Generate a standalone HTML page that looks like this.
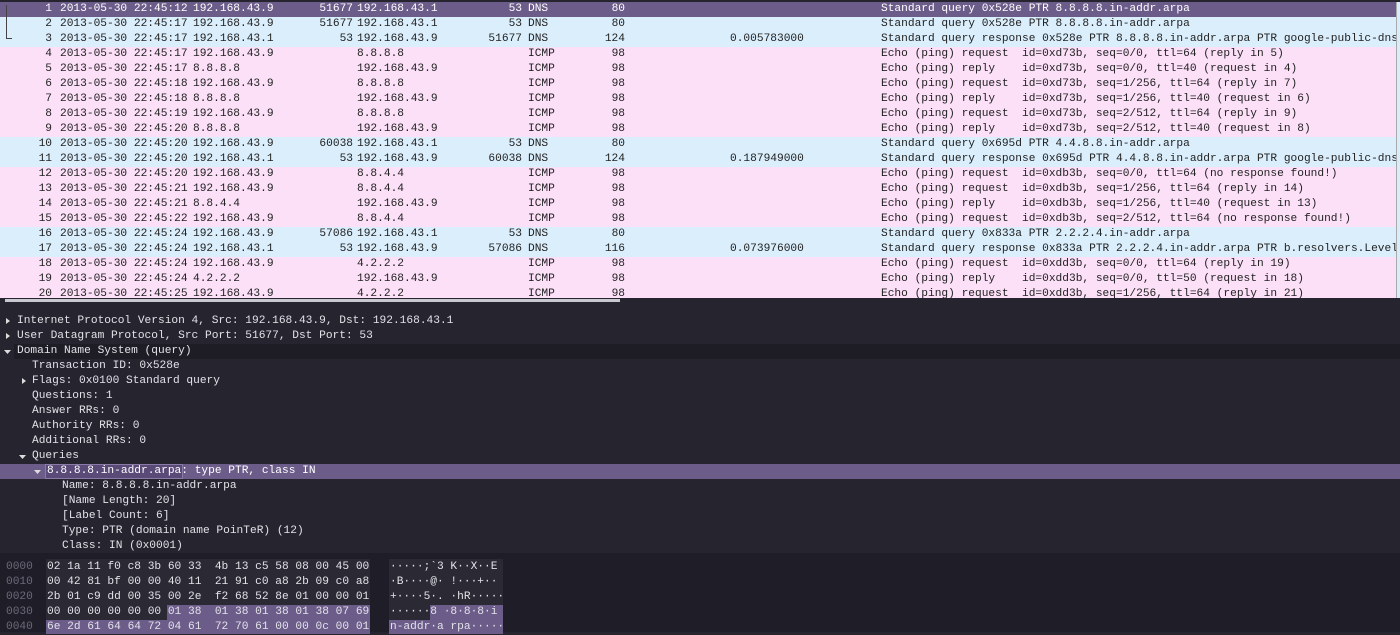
<!DOCTYPE html>
<html><head><meta charset="utf-8"><style>
*{margin:0;padding:0;box-sizing:border-box}
body{width:1400px;height:632px;overflow:hidden;background:#25242f;font-family:"Liberation Mono","DejaVu Sans Mono",monospace;font-size:11.2px;position:relative}
.pl{position:absolute;left:0;top:0;width:1400px;height:298px;background:#25242f;overflow:hidden}
.r{position:absolute;left:0;width:1396px;height:15px;line-height:15px;color:#222;white-space:pre;overflow:hidden}
.r span{position:absolute;top:0}
.d{background:#daeefc}.i{background:#fce0f8}.s{background:#6c5c8a;color:#fff}
.n{right:1344px;text-align:right}
.t{left:60px}.sr{left:193px}.sp{right:1043px}.ds{left:357px}.dp{right:874px}.pr{left:528px}.ln{right:771px}.dt{left:730px}.in{left:881px}
.sb{position:absolute;left:1396px;top:2px;width:1px;height:296px;background:#aaa}
.hs{position:absolute;left:5px;top:299px;width:615px;height:3px;background:#c8c8d0}
.dp2{position:absolute;left:0;top:306px;width:1400px;height:246px;background:#25242f}
.x{position:absolute;height:15px;line-height:15px;color:#e2e2e8;white-space:pre}
.hx{position:absolute;left:0;top:553px;width:1400px;height:79px;background:#1f1e28}
.h{position:absolute;height:15px;line-height:15px;white-space:pre;color:#e2e2e8}
.off{color:#6a6a78}
</style></head><body>
<div class="pl">
<div class="r s" style="top:2px"><span class="n">1</span><span class="t">2013-05-30 22:45:12</span><span class="sr">192.168.43.9</span><span class="sp">51677</span><span class="ds">192.168.43.1</span><span class="dp">53</span><span class="pr">DNS</span><span class="ln">80</span><span class="in">Standard query 0x528e PTR 8.8.8.8.in-addr.arpa</span></div>
<div class="r d" style="top:17px"><span class="n">2</span><span class="t">2013-05-30 22:45:17</span><span class="sr">192.168.43.9</span><span class="sp">51677</span><span class="ds">192.168.43.1</span><span class="dp">53</span><span class="pr">DNS</span><span class="ln">80</span><span class="in">Standard query 0x528e PTR 8.8.8.8.in-addr.arpa</span></div>
<div class="r d" style="top:32px"><span class="n">3</span><span class="t">2013-05-30 22:45:17</span><span class="sr">192.168.43.1</span><span class="sp">53</span><span class="ds">192.168.43.9</span><span class="dp">51677</span><span class="pr">DNS</span><span class="ln">124</span><span class="dt">0.005783000</span><span class="in">Standard query response 0x528e PTR 8.8.8.8.in-addr.arpa PTR google-public-dns-a.google.com</span></div>
<div class="r i" style="top:47px"><span class="n">4</span><span class="t">2013-05-30 22:45:17</span><span class="sr">192.168.43.9</span><span class="ds">8.8.8.8</span><span class="pr">ICMP</span><span class="ln">98</span><span class="in">Echo (ping) request  id=0xd73b, seq=0/0, ttl=64 (reply in 5)</span></div>
<div class="r i" style="top:62px"><span class="n">5</span><span class="t">2013-05-30 22:45:17</span><span class="sr">8.8.8.8</span><span class="ds">192.168.43.9</span><span class="pr">ICMP</span><span class="ln">98</span><span class="in">Echo (ping) reply    id=0xd73b, seq=0/0, ttl=40 (request in 4)</span></div>
<div class="r i" style="top:77px"><span class="n">6</span><span class="t">2013-05-30 22:45:18</span><span class="sr">192.168.43.9</span><span class="ds">8.8.8.8</span><span class="pr">ICMP</span><span class="ln">98</span><span class="in">Echo (ping) request  id=0xd73b, seq=1/256, ttl=64 (reply in 7)</span></div>
<div class="r i" style="top:92px"><span class="n">7</span><span class="t">2013-05-30 22:45:18</span><span class="sr">8.8.8.8</span><span class="ds">192.168.43.9</span><span class="pr">ICMP</span><span class="ln">98</span><span class="in">Echo (ping) reply    id=0xd73b, seq=1/256, ttl=40 (request in 6)</span></div>
<div class="r i" style="top:107px"><span class="n">8</span><span class="t">2013-05-30 22:45:19</span><span class="sr">192.168.43.9</span><span class="ds">8.8.8.8</span><span class="pr">ICMP</span><span class="ln">98</span><span class="in">Echo (ping) request  id=0xd73b, seq=2/512, ttl=64 (reply in 9)</span></div>
<div class="r i" style="top:122px"><span class="n">9</span><span class="t">2013-05-30 22:45:20</span><span class="sr">8.8.8.8</span><span class="ds">192.168.43.9</span><span class="pr">ICMP</span><span class="ln">98</span><span class="in">Echo (ping) reply    id=0xd73b, seq=2/512, ttl=40 (request in 8)</span></div>
<div class="r d" style="top:137px"><span class="n">10</span><span class="t">2013-05-30 22:45:20</span><span class="sr">192.168.43.9</span><span class="sp">60038</span><span class="ds">192.168.43.1</span><span class="dp">53</span><span class="pr">DNS</span><span class="ln">80</span><span class="in">Standard query 0x695d PTR 4.4.8.8.in-addr.arpa</span></div>
<div class="r d" style="top:152px"><span class="n">11</span><span class="t">2013-05-30 22:45:20</span><span class="sr">192.168.43.1</span><span class="sp">53</span><span class="ds">192.168.43.9</span><span class="dp">60038</span><span class="pr">DNS</span><span class="ln">124</span><span class="dt">0.187949000</span><span class="in">Standard query response 0x695d PTR 4.4.8.8.in-addr.arpa PTR google-public-dns-b.google.com</span></div>
<div class="r i" style="top:167px"><span class="n">12</span><span class="t">2013-05-30 22:45:20</span><span class="sr">192.168.43.9</span><span class="ds">8.8.4.4</span><span class="pr">ICMP</span><span class="ln">98</span><span class="in">Echo (ping) request  id=0xdb3b, seq=0/0, ttl=64 (no response found!)</span></div>
<div class="r i" style="top:182px"><span class="n">13</span><span class="t">2013-05-30 22:45:21</span><span class="sr">192.168.43.9</span><span class="ds">8.8.4.4</span><span class="pr">ICMP</span><span class="ln">98</span><span class="in">Echo (ping) request  id=0xdb3b, seq=1/256, ttl=64 (reply in 14)</span></div>
<div class="r i" style="top:197px"><span class="n">14</span><span class="t">2013-05-30 22:45:21</span><span class="sr">8.8.4.4</span><span class="ds">192.168.43.9</span><span class="pr">ICMP</span><span class="ln">98</span><span class="in">Echo (ping) reply    id=0xdb3b, seq=1/256, ttl=40 (request in 13)</span></div>
<div class="r i" style="top:212px"><span class="n">15</span><span class="t">2013-05-30 22:45:22</span><span class="sr">192.168.43.9</span><span class="ds">8.8.4.4</span><span class="pr">ICMP</span><span class="ln">98</span><span class="in">Echo (ping) request  id=0xdb3b, seq=2/512, ttl=64 (no response found!)</span></div>
<div class="r d" style="top:227px"><span class="n">16</span><span class="t">2013-05-30 22:45:24</span><span class="sr">192.168.43.9</span><span class="sp">57086</span><span class="ds">192.168.43.1</span><span class="dp">53</span><span class="pr">DNS</span><span class="ln">80</span><span class="in">Standard query 0x833a PTR 2.2.2.4.in-addr.arpa</span></div>
<div class="r d" style="top:242px"><span class="n">17</span><span class="t">2013-05-30 22:45:24</span><span class="sr">192.168.43.1</span><span class="sp">53</span><span class="ds">192.168.43.9</span><span class="dp">57086</span><span class="pr">DNS</span><span class="ln">116</span><span class="dt">0.073976000</span><span class="in">Standard query response 0x833a PTR 2.2.2.4.in-addr.arpa PTR b.resolvers.Level3.net</span></div>
<div class="r i" style="top:257px"><span class="n">18</span><span class="t">2013-05-30 22:45:24</span><span class="sr">192.168.43.9</span><span class="ds">4.2.2.2</span><span class="pr">ICMP</span><span class="ln">98</span><span class="in">Echo (ping) request  id=0xdd3b, seq=0/0, ttl=64 (reply in 19)</span></div>
<div class="r i" style="top:272px"><span class="n">19</span><span class="t">2013-05-30 22:45:24</span><span class="sr">4.2.2.2</span><span class="ds">192.168.43.9</span><span class="pr">ICMP</span><span class="ln">98</span><span class="in">Echo (ping) reply    id=0xdd3b, seq=0/0, ttl=50 (request in 18)</span></div>
<div class="r i" style="top:287px"><span class="n">20</span><span class="t">2013-05-30 22:45:25</span><span class="sr">192.168.43.9</span><span class="ds">4.2.2.2</span><span class="pr">ICMP</span><span class="ln">98</span><span class="in">Echo (ping) request  id=0xdd3b, seq=1/256, ttl=64 (reply in 21)</span></div>
<div style="position:absolute;left:6px;top:5px;width:1px;height:34px;background:#444"></div>
<div style="position:absolute;left:6px;top:38px;width:6px;height:1px;background:#444"></div>
<div class="sb"></div>
<div style="position:absolute;left:1397px;top:2px;width:3px;height:296px;background:#d8ecfa"></div>
</div>
<div class="hs"></div>
<div class="dp2">
<div style="position:absolute;left:14px;top:38px;width:1386px;height:15px;background:#1e1d26"></div>
<div style="position:absolute;left:0;top:158px;width:1400px;height:15px;background:#6c5c8a"></div>
<div style="position:absolute;left:45px;top:158px;width:138px;height:15px;background:#5a4a78;border:1px solid #8a7aa8"></div>
</div>
<svg style="position:absolute;left:0;top:0" width="60" height="560">
<g fill="#ddd">
<path d="M6 318l4 3-4 3z"/><path d="M6 333l4 3-4 3z"/><path d="M4 350l7 0-3.5 4z"/>
<path d="M22 378l4 3-4 3z"/><path d="M19 455l7 0-3.5 4z"/><path d="M34 470l7 0-3.5 4z"/>
</g></svg>
<div class="x" style="left:17px;top:314px">Internet Protocol Version 4, Src: 192.168.43.9, Dst: 192.168.43.1</div>
<div class="x" style="left:17px;top:329px">User Datagram Protocol, Src Port: 51677, Dst Port: 53</div>
<div class="x" style="left:17px;top:344px">Domain Name System (query)</div>
<div class="x" style="left:32px;top:359px">Transaction ID: 0x528e</div>
<div class="x" style="left:32px;top:374px">Flags: 0x0100 Standard query</div>
<div class="x" style="left:32px;top:389px">Questions: 1</div>
<div class="x" style="left:32px;top:404px">Answer RRs: 0</div>
<div class="x" style="left:32px;top:419px">Authority RRs: 0</div>
<div class="x" style="left:32px;top:434px">Additional RRs: 0</div>
<div class="x" style="left:32px;top:449px">Queries</div>
<div class="x" style="left:47px;top:464px;color:#fff">8.8.8.8.in-addr.arpa: type PTR, class IN</div>
<div class="x" style="left:62px;top:479px">Name: 8.8.8.8.in-addr.arpa</div>
<div class="x" style="left:62px;top:494px">[Name Length: 20]</div>
<div class="x" style="left:62px;top:509px">[Label Count: 6]</div>
<div class="x" style="left:62px;top:524px">Type: PTR (domain name PoinTeR) (12)</div>
<div class="x" style="left:62px;top:539px">Class: IN (0x0001)</div>
<div class="hx">
<div style="position:absolute;left:46px;top:6px;width:324px;height:75px;background:#2a2934"></div>
<div style="position:absolute;left:389px;top:6px;width:114px;height:75px;background:#2a2934"></div>
<div style="position:absolute;left:167px;top:52px;width:203px;height:15px;background:#6c5c8a"></div>
<div style="position:absolute;left:46px;top:67px;width:324px;height:14px;background:#6c5c8a"></div>
<div style="position:absolute;left:430px;top:52px;width:73px;height:15px;background:#6c5c8a"></div>
<div style="position:absolute;left:389px;top:67px;width:114px;height:14px;background:#6c5c8a"></div>
<div class="h off" style="left:6px;top:7px">0000
0010
0020
0030
0040</div>
<div class="h" style="left:47px;top:7px">02 1a 11 f0 c8 3b 60 33  4b 13 c5 58 08 00 45 00
00 42 81 bf 00 00 40 11  21 91 c0 a8 2b 09 c0 a8
2b 01 c9 dd 00 35 00 2e  f2 68 52 8e 01 00 00 01
00 00 00 00 00 00 01 38  01 38 01 38 01 38 07 69
6e 2d 61 64 64 72 04 61  72 70 61 00 00 0c 00 01</div>
<div class="h" style="left:390px;top:7px">·····;`3 K··X··E
·B····@· !···+··
+····5·. ·hR·····
······8 ·8·8·8·i
n-addr·a rpa·····</div>
</div>
</body></html>
